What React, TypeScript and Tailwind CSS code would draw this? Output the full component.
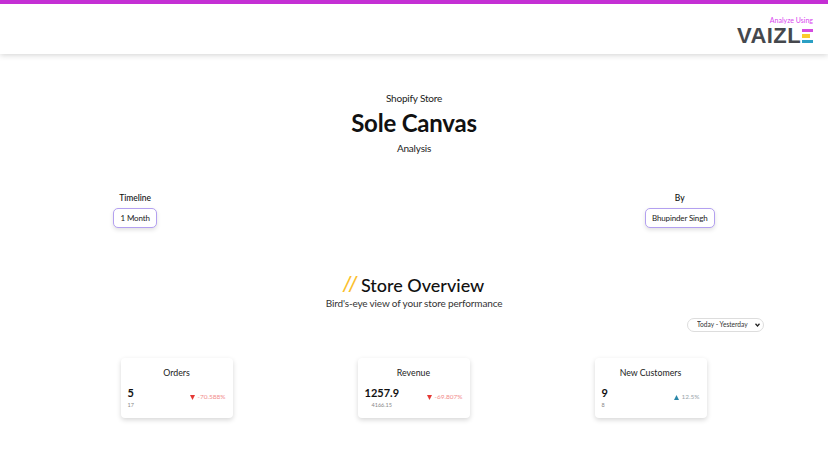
const font = { fontFamily: 'Lato, sans-serif' };

type Stat = { title: string; value: string; prev: string; change: string; up?: boolean };

const stats: Stat[] = [
  { title: 'Orders', value: '5', prev: '17', change: '-70.588%' },
  { title: 'Revenue', value: '1257.9', prev: '4166.15', change: '-69.807%' },
  { title: 'New Customers', value: '9', prev: '8', change: '12.5%', up: true },
];

const Logo = () => (
  <div className="flex flex-col items-end">
    <span className="text-[7px] leading-[10px] text-[#d946ef]">Analyze Using</span>
    <div className="flex items-center mt-[2px]">
      <span className="font-['Liberation_Sans'] font-bold text-[22px] leading-[17px] tracking-[0.4px] text-[#45484d]">VAIZL</span>
      <div className="flex flex-col gap-[2px] w-[11px] ml-[1px]">
        <div className="h-[3px] bg-[#d44be0]" />
        <div className="h-[4px] w-[8px] bg-[#fbcb2e]" />
        <div className="h-[3px] bg-[#2a9fc4]" />
      </div>
    </div>
  </div>
);

const Pick = ({ label, value }: { label: string; value: string }) => (
  <div className="flex flex-col items-center">
    <span className="text-[8.5px] leading-[12px] font-medium text-[#111]">{label}</span>
    <div className="mt-[4px] h-[20px] px-[6.5px] flex items-center bg-white rounded-[5px] border-[1.5px] border-[#b3a0f0] shadow-[0_2px_4px_rgba(0,0,0,0.12)] text-[8px] tracking-[-0.15px] text-[#222]">
      {value}
    </div>
  </div>
);

const Card = ({ s }: { s: Stat }) => (
  <div className="w-[112px] h-[60px] mx-auto bg-white rounded-[4px] shadow-[0_2px_5px_rgba(0,0,0,0.16)] px-[7px] pt-[8px]">
    <div className="text-center text-[8.8px] leading-[14px] text-[#222]">{s.title}</div>
    <div className="flex justify-between items-center mt-[5px]">
      <div className="flex flex-col items-start">
        <span className="text-[11px] leading-[15px] font-bold text-[#111]">{s.value}</span>
        <span className={`text-[5.5px] leading-[8px] mt-[1px] text-[#888] ${s.prev.length > 2 ? 'ml-[7px]' : ''}`}>{s.prev}</span>
      </div>
      <div className={`flex items-center gap-[2px] text-[6.5px] ${s.up ? 'text-[#9aa5aa]' : 'text-[#f28b8b]'}`}>
        <svg className="w-[5px] h-[5px]" viewBox="0 0 10 10" fill={s.up ? '#2a86a8' : '#e53935'}>
          <path d={s.up ? 'M5 0 10 10H0Z' : 'M0 0H10L5 10Z'} />
        </svg>
        {s.change}
      </div>
    </div>
  </div>
);

export default function App() {
  return (
    <div className="w-[828px] h-[466px] overflow-hidden bg-white" style={font}>
      <header className="h-[54px] border-t-4 border-[#c42fd4] shadow-[0_1px_6px_rgba(0,0,0,0.18)] flex justify-end pt-[11px] pr-[15px]">
        <Logo />
      </header>

      <section className="flex flex-col items-center pt-[37px] text-[#222]">
        <p className="text-[10px] leading-[14px] tracking-[-0.2px]">Shopify Store</p>
        <h1 className="text-[24px] leading-[32px] font-bold mt-[2px] tracking-[-0.2px] text-[#111]">Sole Canvas</h1>
        <p className="text-[10px] leading-[14px] mt-[2px] tracking-[-0.2px]">Analysis</p>
      </section>

      <section className="flex justify-between pl-[113px] pr-[113px] mt-[37px]">
        <Pick label="Timeline" value="1 Month" />
        <Pick label="By" value="Bhupinder Singh" />
      </section>

      <section className="flex flex-col items-center mt-[45px]">
        <h2 className="text-[18px] leading-[24px] font-medium text-[#111]">
          <span className="font-['Liberation_Sans'] text-[#fbc02d] text-[22px] mr-[5px] italic">//</span>Store Overview
        </h2>
        <p className="text-[10px] leading-[14px] -mt-[1px] tracking-[-0.15px] text-[#333]">Bird's-eye view of your store performance</p>
      </section>

      <div className="flex justify-end pr-[64px] mt-[8px]">
        <div className="relative w-[77px] h-[14px]">
          <select className="block appearance-none w-full h-full rounded-full border border-[#ddd] bg-white text-[6.6px] text-[#333] pl-[9px]">
            <option>Today - Yesterday</option>
          </select>
          <svg className="absolute right-[4px] top-[5px] w-[5px] h-[4px]" viewBox="0 0 10 8" fill="none" stroke="#222" strokeWidth="2.5">
            <path d="M1 1.5 5 6 9 1.5" />
          </svg>
        </div>
      </div>

      <section className="grid grid-cols-3 w-[711px] ml-[58px] mt-[26px]">
        {stats.map((s) => (
          <Card key={s.title} s={s} />
        ))}
      </section>
    </div>
  );
}
